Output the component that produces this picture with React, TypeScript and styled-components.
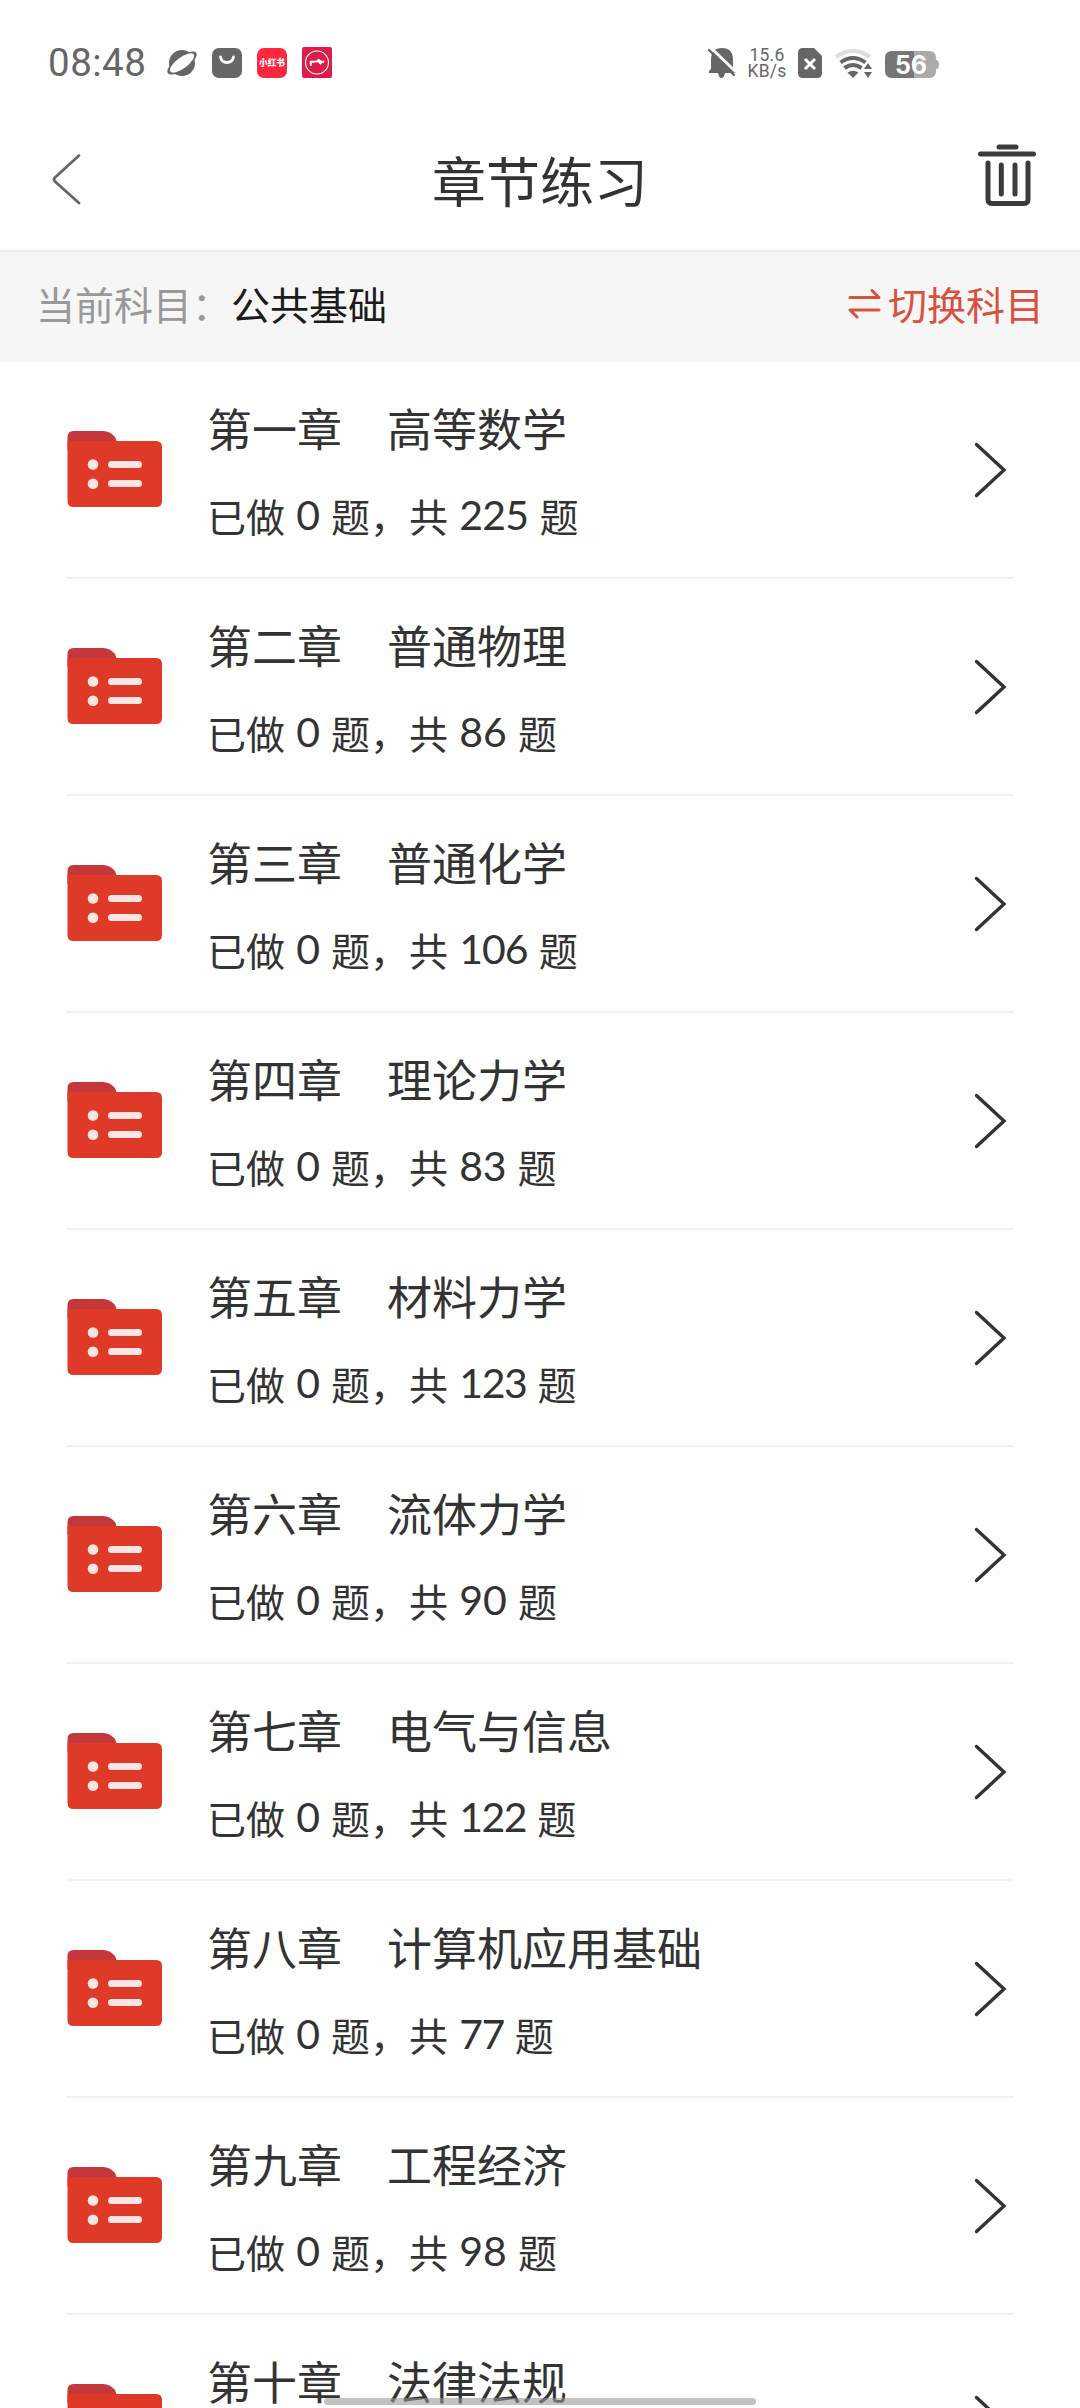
import React from "react";
import styled, { createGlobalStyle } from "styled-components";

const Global = createGlobalStyle`
  * { box-sizing: border-box; }
  html, body { margin: 0; background: #fefefe; }
  body { font-family: "Noto Sans CJK SC", sans-serif; color: #333; }
`;
const Screen = styled.div`
  position: relative;
  width: 1080px;
  height: 2408px;
  overflow: hidden;
  display: flex;
  flex-direction: column;
  background: #fefefe;
`;
const StatusBar = styled.header`
  flex: none;
  height: 126px;
  padding: 0 141px 0 48px;
  display: flex;
  justify-content: space-between;
`;
const StatusGroup = styled.div`
  display: flex;
  align-items: center;
`;
const Clock = styled.span`
  width: 119px;
  font: 400 38.5px/44px Roboto, sans-serif;
  letter-spacing: 0.5px;
  color: #666;
`;
const StatusIcon = styled.svg<{ $gap: number }>`
  flex: none;
  margin-left: ${(p) => p.$gap}px;
  overflow: visible;
`;
const Speed = styled.div`
  width: 38px;
  margin-left: 12px;
  display: flex;
  flex-direction: column;
  align-items: center;
  font: 400 17.5px/16px Roboto, sans-serif;
  letter-spacing: 0.2px;
  white-space: nowrap;
  color: #666;
`;
const Glyph = styled.text<{ $size: number; $weight: number }>`
  font-family: Inter, "Noto Sans CJK SC", sans-serif;
  font-size: ${(p) => p.$size}px;
  font-weight: ${(p) => p.$weight};
  fill: #fff;
`;
const NavBar = styled.nav`
  flex: none;
  height: 126px;
  padding: 0 38px;
  display: flex;
  justify-content: space-between;
  border-bottom: 2px solid #ececec;
`;
const NavSide = styled.div`
  width: 66px;
  flex: none;
`;
const PageTitle = styled.h1`
  margin: 26px 0 0;
  font-size: 54px;
  line-height: 56px;
  font-weight: 400;
`;
const SubjectBar = styled.section`
  flex: none;
  height: 110px;
  padding: 0 36px 8px;
  display: flex;
  align-items: center;
  background: #f6f6f6;
  font-size: 39px;
  line-height: 56px;
`;
const SubjectLabel = styled.span`
  color: #999;
`;
const SubjectName = styled.span`
  color: #1c1c1c;
`;
const Switch = styled.span`
  margin-left: auto;
  display: flex;
  align-items: center;
  gap: 7px;
  color: #d8503f;
`;
const List = styled.ul`
  margin: 0;
  padding: 0 66px;
  list-style: none;
`;
const Row = styled.li`
  height: 217px;
  display: flex;
  border-bottom: 2px solid #f1f1f1;
`;
const RowText = styled.div`
  flex: 1;
  margin-left: 44px;
  padding-top: 34px;
`;
const Chapter = styled.div`
  font-size: 45px;
  line-height: 64px;
  white-space: pre;
`;
const Progress = styled.div`
  margin-top: 27px;
  font-size: 39px;
  line-height: 56px;
  display: flex;
`;
const Count = styled.span<{ $track: number }>`
  margin: 0 11.2px;
  font-family: Lato, sans-serif;
  font-size: 41px;
  letter-spacing: ${(p) => p.$track}px;
`;
const HomeIndicator = styled.div`
  position: absolute;
  left: 324px;
  bottom: 3px;
  width: 432px;
  height: 7px;
  border-radius: 4px;
  background: rgba(150, 150, 150, 0.58);
`;

const digitWidths: Record<string, number> = { "1": 20.8, "2": 23, "3": 23.2, "5": 23, "7": 22.1 };

// Numbers are set proportionally: narrow digits tighten the tracking.
const Num = ({ value }: { value: number }) => {
  const digits = String(value).split("");
  const total = digits.reduce((sum, d) => sum + (digitWidths[d] ?? 23.7), 0);
  return <Count $track={+(total / digits.length - 23.78).toFixed(2)}>{value}</Count>;
};

const Folder = () => (
  <svg width="97" height="215" viewBox="66 0 97 215">
    <path d="M67.500 84V75q0-6 6-6H103q7 0 12 6q2 4 2 8L112 88H67.500Z" fill="#c4373a" />
    <path d="M67.500 79H156q6 0 6 6V139q0 6-6 6H73.500q-6 0-6-6Z" fill="#df3a28" />
    <g fill="#fce5e2">
      <circle cx="93" cy="102.500" r="5.300" />
      <circle cx="93" cy="121.700" r="5.300" />
      <rect x="108" y="99" width="34" height="7" rx="3.500" />
      <rect x="108" y="118" width="34" height="7" rx="3.500" />
    </g>
  </svg>
);
const Arrow = () => (
  <svg width="44" height="215" viewBox="970 0 44 215">
    <path d="M976.500 82.500L1004 108L976.500 133.500" fill="none" stroke="#333" strokeWidth="3.400" strokeLinecap="round" />
  </svg>
);

const chapters: [string, string, number][] = [
  ["第一章", "高等数学", 225],
  ["第二章", "普通物理", 86],
  ["第三章", "普通化学", 106],
  ["第四章", "理论力学", 83],
  ["第五章", "材料力学", 123],
  ["第六章", "流体力学", 90],
  ["第七章", "电气与信息", 122],
  ["第八章", "计算机应用基础", 77],
  ["第九章", "工程经济", 98],
  ["第十章", "法律法规", 0],
];

export default function App() {
  return (
    <Screen>
      <Global />
      <StatusBar>
        <StatusGroup>
          <Clock>08:48</Clock>
          <StatusIcon $gap={0} width="30" height="30" viewBox="0 0 30 30">
            <circle cx="15" cy="15" r="13" fill="#666" />
            <g transform="rotate(-36 15 15)">
              <ellipse cx="15" cy="15" rx="17.500" ry="6.500" fill="#666" />
              <ellipse cx="15" cy="15" rx="14.500" ry="5.500" fill="#fefefe" />
            </g>
          </StatusIcon>
          <StatusIcon $gap={15} width="30" height="30" viewBox="0 0 30 30">
            <rect width="30" height="30" rx="7" fill="#666" />
            <path d="M8.500 9q1 5.500 6.500 5.500T21.500 9" fill="none" stroke="#fff" strokeWidth="2.800" strokeLinecap="round" />
          </StatusIcon>
          <StatusIcon $gap={15} width="30" height="30" viewBox="0 0 30 30">
            <rect width="30" height="30" rx="7" fill="#ff2640" />
            <Glyph $size={8.6} $weight={900} x="15" y="18.400" textAnchor="middle">小红书</Glyph>
          </StatusIcon>
          <StatusIcon $gap={15} width="30" height="30" viewBox="0 0 30 30">
            <rect y="-1" width="30" height="31" rx="2" fill="#dc1c4b" />
            <circle cx="15" cy="14.500" r="11.500" fill="none" stroke="#fff" strokeWidth="1.100" />
            <path d="M8 17.500V13H14L17 11L19 13H22V14.500H20L18.500 16.500L16 14L9.500 14.500V17.500Z" fill="#fff" stroke="#fff" strokeWidth=".6" />
          </StatusIcon>
        </StatusGroup>
        <StatusGroup>
          <StatusIcon $gap={0} width="28" height="30" viewBox="0 0 28 30">
            <path d="M3 12Q3 0 14 0T25 12V21L28 25H17Q16 30 13.500 30T10 25H1V23L3 21Z" fill="#666" />
            <path d="M2 -1L28 24" stroke="#fefefe" strokeWidth="3" />
            <path d="M1 2L26 27" stroke="#666" strokeWidth="2.400" strokeLinecap="round" />
          </StatusIcon>
          <Speed>
            <span>15.6</span>
            <span>KB/s</span>
          </Speed>
          <StatusIcon $gap={12} width="24" height="30" viewBox="0 0 24 30">
            <path d="M5 0H16L24 8V25q0 5-5 5H5q-5 0-5-5V5q0-5 5-5Z" fill="#666" />
            <path d="M7 11L17 21M17 11L7 21" stroke="#fff" strokeWidth="3" />
          </StatusIcon>
          <StatusIcon $gap={13} width="37" height="30" viewBox="0 0 37 30">
            <g fill="none" strokeWidth="4">
              <path d="M1 9Q18 -3 35 9" stroke="#ddd" />
              <path d="M5.500 14.500Q18 5.500 30.500 14.500" stroke="#666" />
              <path d="M9.500 20Q18 14 26.500 20" stroke="#666" />
            </g>
            <path d="M12.500 24.500Q18 21 23.500 24.500L18 30Z" fill="#666" />
            <path d="M33 15L37 21H29ZM29 24H37L33 30Z" fill="#666" />
          </StatusIcon>
          <StatusIcon $gap={13} width="54" height="30" viewBox="0 0 54 30">
            <path d="M7 3H29V30H7q-7 0-7-7V10q0-7 7-7Z" fill="#767676" />
            <path d="M29 3H44q7 0 7 7v2q3 0 3 4.500T51 21v2q0 7-7 7H29Z" fill="#aaa" />
            <Glyph $size={25} $weight={700} x="26" y="25.500" textAnchor="middle">56</Glyph>
          </StatusIcon>
        </StatusGroup>
      </StatusBar>
      <NavBar>
        <NavSide>
          <svg width="50" height="100" viewBox="-10 0 50 100">
            <path d="M31 29.500L7 51.500Q5 53.500 7 55.500L31 77" fill="none" stroke="#666" strokeWidth="2.800" strokeLinecap="round" />
          </svg>
        </NavSide>
        <PageTitle>章节练习</PageTitle>
        <NavSide>
          <svg width="66" height="100" viewBox="0 0 66 100">
            <g fill="none" stroke="#3b3b3b" strokeWidth="5" strokeLinecap="round">
              <path d="M23 21H40M4.500 28H57.500" />
              <path d="M12 37V73.500q0 4 4 4H48q4 0 4-4V37M25.300 39V68M39 39V68" />
            </g>
          </svg>
        </NavSide>
      </NavBar>
      <SubjectBar>
        <SubjectLabel>当前科目：</SubjectLabel>
        <SubjectName>公共基础</SubjectName>
        <Switch>
          <svg width="34" height="32" viewBox="0 0 34 32">
            <path d="M3 10.500H32L25 3.500M32 23H3L10 30" fill="none" stroke="#d8503f" strokeWidth="3" strokeLinecap="round" strokeLinejoin="round" />
          </svg>
          <span>切换科目</span>
        </Switch>
      </SubjectBar>
      <List>
        {chapters.map(([no, name, total]) => (
          <Row key={no}>
            <Folder />
            <RowText>
              <Chapter>{no}　{name}</Chapter>
              {total > 0 && (
                <Progress>
                  已做<Num value={0} />题，共<Num value={total} />题
                </Progress>
              )}
            </RowText>
            <Arrow />
          </Row>
        ))}
      </List>
      <HomeIndicator />
    </Screen>
  );
}
